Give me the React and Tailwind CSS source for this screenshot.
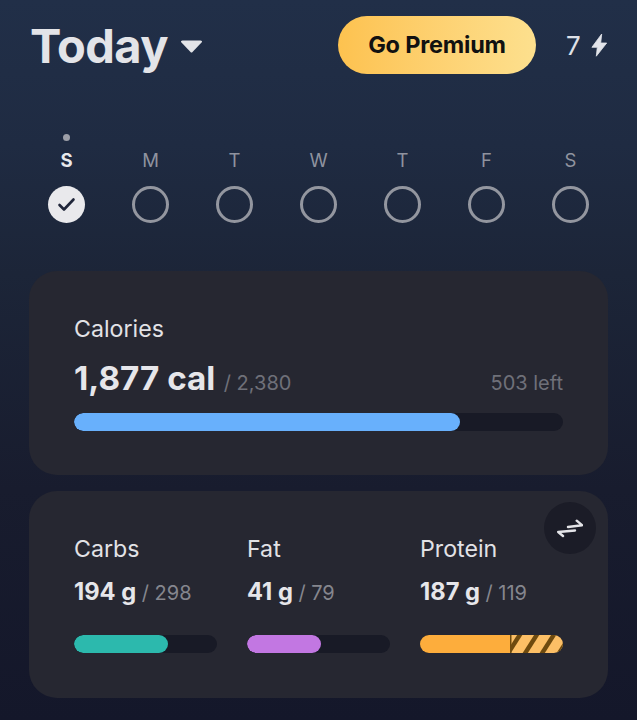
import React from "react";

const days = ["M", "T", "W", "T", "F", "S"];

function Macro({ name, value, goal, width, color, extra }) {
  return (
    <div className="w-[143px]">
      <div className="text-[23.2px] leading-[28px] text-[#e2e2e6]">{name}</div>
      <div className="mt-[15px] flex items-baseline leading-[28px]">
        <span className="text-[23.7px] font-bold text-[#e6e6ea]">{value}</span>
        <span className="ml-[5.5px] text-[20px] text-[#85868e]">/ {goal}</span>
      </div>
      <div className="mt-[28px] flex h-[18px] overflow-hidden rounded-full bg-[#181a26]">
        {extra ? (
          <>
            <div className="h-full" style={{ width, backgroundColor: color }} />
            <svg className="h-full flex-1" viewBox="0 0 53 18" preserveAspectRatio="none">
              <rect width="53" height="18" fill="#fcbf66" />
              <g stroke="#6e4a0e" strokeWidth="4.4">
                <path d="M-3 20 L11 -2" />
                <path d="M14 20 L28 -2" />
                <path d="M31 20 L45 -2" />
                <path d="M48 20 L62 -2" />
              </g>
              <rect width="1.5" height="18" fill="#6e4a0e" />
            </svg>
          </>
        ) : (
          <div className="h-full rounded-full" style={{ width, backgroundColor: color }} />
        )}
      </div>
    </div>
  );
}

export default function App() {
  return (
    <div
      className="h-[720px] w-[637px] overflow-hidden bg-[linear-gradient(180deg,#212f48_0%,#1f2b42_20%,#1c2538_38%,#181c2e_68%,#14172a_100%)]"
      style={{ fontFamily: "Inter, 'Liberation Sans', sans-serif" }}
    >
      <div className="flex h-[74px] items-start pl-[30px] pt-[16px]">
        <div className="flex h-[58px] items-center">
          <span className="text-[47px] font-bold leading-none tracking-[-0.6px] text-[#e3e4e8]">Today</span>
          <svg className="ml-[12px] mt-[2px]" width="23" height="13" viewBox="0 0 23 13">
            <path d="M1 2 Q0.5 0.5 2.5 0.5 L20.5 0.5 Q22.5 0.5 22 2 L12.5 12 Q11.5 13 10.5 12 Z" fill="#e3e4e8" />
          </svg>
        </div>
        <div className="ml-auto flex h-[58px] w-[198px] items-center justify-center rounded-full bg-gradient-to-r from-[#fdc24f] to-[#fde08e]">
          <span className="text-[23.5px] font-bold tracking-[-0.2px] text-[#111111]">Go Premium</span>
        </div>
        <div className="flex h-[58px] w-[101px] items-center pl-[30px]">
          <span className="text-[26px] font-normal text-[#dfe1e7]">7</span>
          <svg className="ml-[10px]" width="17" height="24" viewBox="0 0 17 24">
            <path d="M10.7 1 L0.9 14.3 L6.3 14.3 L5.3 23.2 L15.7 10 L9.7 10 Z" fill="#e2e4ea" stroke="#e2e4ea" strokeWidth="0.8" strokeLinejoin="round" />
          </svg>
        </div>
      </div>

      <div className="ml-[24.5px] mt-[60px] grid w-[588px] grid-cols-7">
        <div className="flex flex-col items-center">
          <div className="h-[7px] w-[7px] rounded-full bg-[#9d9fa8]" />
          <div className="mt-[8px] text-[18.5px] font-bold leading-[22px] text-[#e8e9ed]">S</div>
          <div className="mt-[15px] flex h-[37px] w-[37px] items-center justify-center rounded-full bg-[#e9e9ec]">
            <svg width="19" height="15" viewBox="0 0 19 15" fill="none">
              <path d="M2.5 8 L7 12.5 L16.5 2.5" stroke="#20263a" strokeWidth="2.6" strokeLinecap="round" strokeLinejoin="round" />
            </svg>
          </div>
        </div>
        {days.map((d, i) => (
          <div key={i} className="flex flex-col items-center">
            <div className="h-[7px]" />
            <div className="mt-[8px] text-[18.5px] leading-[22px] text-[#8f939f]">{d}</div>
            <div className="mt-[15px] h-[37px] w-[37px] rounded-full border-[3px] border-[#93969f]" />
          </div>
        ))}
      </div>

      <div className="ml-[29px] mt-[48px] h-[204px] w-[579px] rounded-[28px] bg-[#262731] px-[45px] pt-[44px]">
        <div className="text-[23.2px] leading-[28px] text-[#e2e2e6]">Calories</div>
        <div className="mt-[15px] flex items-baseline leading-[40px]">
          <span className="text-[33.2px] font-bold text-[#e6e6ea]">1,877 cal</span>
          <span className="ml-[8.5px] text-[20px] text-[#6f7079]">/ 2,380</span>
          <span className="ml-auto text-[20px] text-[#6f7079]">503 left</span>
        </div>
        <div className="mt-[10px] h-[18px] overflow-hidden rounded-full bg-[#181a26]">
          <div className="h-full rounded-full bg-[#68b0fc]" style={{ width: "78.9%" }} />
        </div>
      </div>

      <div className="relative ml-[29px] mt-[16px] h-[207px] w-[579px] rounded-[28px] bg-[#262731] px-[45px] pt-[44px]">
        <div className="flex gap-[30px]">
          <Macro name="Carbs" value="194 g" goal="298" width="65.5%" color="#2cb9ad" />
          <Macro name="Fat" value="41 g" goal="79" width="52%" color="#c277e2" />
          <Macro name="Protein" value="187 g" goal="119" width="63%" color="#fdad3c" extra />
        </div>
        <div className="absolute right-[12px] top-[11px] flex h-[52px] w-[52px] items-center justify-center rounded-full bg-[#1b1c27]">
          <svg width="26" height="20" viewBox="0 0 26 20" fill="none" stroke="#e4e4e8" strokeWidth="2.4" strokeLinecap="round" strokeLinejoin="round">
            <path d="M11 9 L25 7.2 L19.7 2.7" />
            <path d="M18 12.5 L1.2 14 L6 18" />
          </svg>
        </div>
      </div>
    </div>
  );
}
